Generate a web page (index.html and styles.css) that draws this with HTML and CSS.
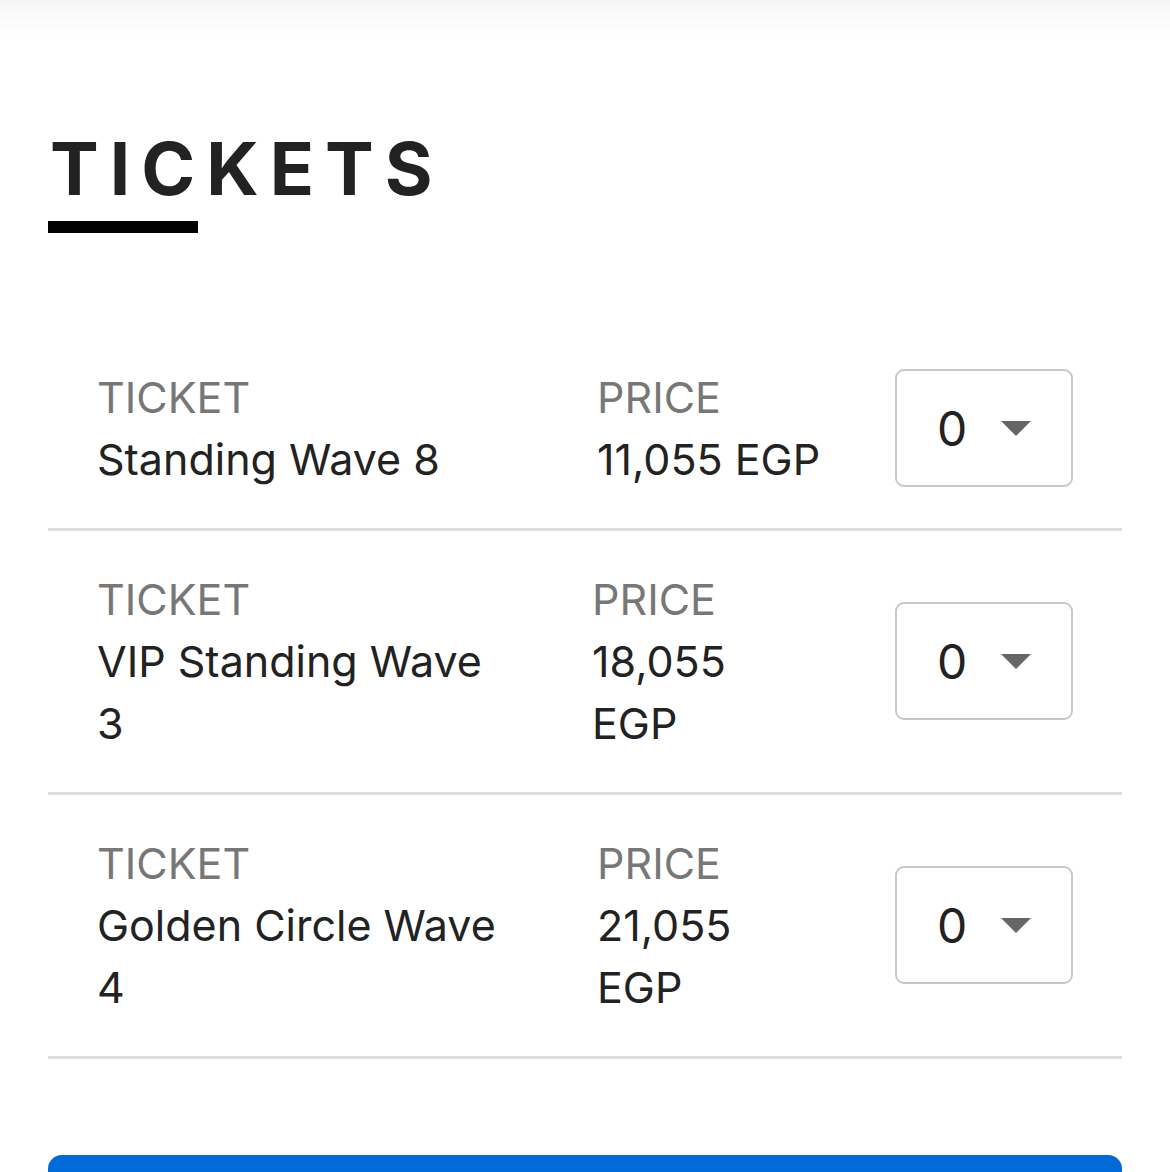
FILE: index.html
```html
<!DOCTYPE html>
<html lang="en">
<head>
    <meta charset="UTF-8">
    <meta name="viewport" content="width=device-width, initial-scale=1.0">
    <title>Tickets</title>
    <link rel="stylesheet" href="styles.css">
</head>
<body>
    <div class="top-shade"></div>

    <section class="tickets">
        <h2 class="section-title">TICKETS</h2>

        <div class="ticket-list">
            <div class="ticket-row">
                <div class="ticket-col name-col">
                    <span class="label">TICKET</span>
                    <span class="value">Standing Wave 8</span>
                </div>
                <div class="ticket-col price-col">
                    <span class="label">PRICE</span>
                    <span class="value">11,055 EGP</span>
                </div>
                <div class="qty-select">
                    <span class="qty">0</span>
                    <span class="caret"></span>
                </div>
            </div>

            <div class="ticket-row">
                <div class="ticket-col name-col">
                    <span class="label">TICKET</span>
                    <span class="value">VIP Standing Wave 3</span>
                </div>
                <div class="ticket-col price-col shifted">
                    <span class="label">PRICE</span>
                    <span class="value">18,055 EGP</span>
                </div>
                <div class="qty-select">
                    <span class="qty">0</span>
                    <span class="caret"></span>
                </div>
            </div>

            <div class="ticket-row">
                <div class="ticket-col name-col">
                    <span class="label">TICKET</span>
                    <span class="value">Golden Circle Wave 4</span>
                </div>
                <div class="ticket-col price-col">
                    <span class="label">PRICE</span>
                    <span class="value">21,055 EGP</span>
                </div>
                <div class="qty-select">
                    <span class="qty">0</span>
                    <span class="caret"></span>
                </div>
            </div>
        </div>

        <button class="checkout-button"></button>
    </section>
</body>
</html>
```

FILE: styles.css
```css
body {
    font-family: Inter, "Noto Sans", Arial, sans-serif;
    margin: 0;
    padding: 0;
    background-color: #ffffff;
    color: #222222;
}

.top-shade {
    height: 36px;
    background: linear-gradient(to bottom, #f6f6f6, #ffffff);
}

.tickets {
    padding: 0 48px;
}

.section-title {
    margin: 96px 0 0 2px;
    font-size: 73px;
    line-height: 1;
    font-weight: 700;
    letter-spacing: 11px;
    color: #222222;
}

.section-title::after {
    content: "";
    display: block;
    width: 150px;
    height: 12px;
    margin: 16px 0 0 -2px;
    background-color: #000000;
}

.ticket-list {
    margin-top: 96px;
}

.ticket-row {
    display: grid;
    grid-template-columns: 500px 298px 178px;
    align-items: center;
    padding: 37px 0 38px 49px;
    border-bottom: 3px solid #dedede;
}

.ticket-col {
    display: flex;
    flex-direction: column;
    font-size: 43px;
    line-height: 62px;
}

.name-col {
    padding-right: 88px;
}

.price-col {
    padding-right: 72px;
}

.price-col.shifted {
    margin-left: -5px;
}

.label {
    color: #777777;
}

.value {
    color: #222222;
}

.qty-select {
    display: flex;
    align-items: center;
    justify-content: space-between;
    height: 114px;
    padding: 0 40px 0 40px;
    border: 2px solid #c8c8c8;
    border-radius: 9px;
}

.qty {
    font-size: 48px;
    color: #222222;
}

.caret {
    width: 0;
    height: 0;
    border-left: 15px solid transparent;
    border-right: 15px solid transparent;
    border-top: 15px solid #666666;
}

.checkout-button {
    display: block;
    width: 100%;
    height: 80px;
    margin-top: 96px;
    border: none;
    border-radius: 14px;
    background-color: #006ad9;
}
```
